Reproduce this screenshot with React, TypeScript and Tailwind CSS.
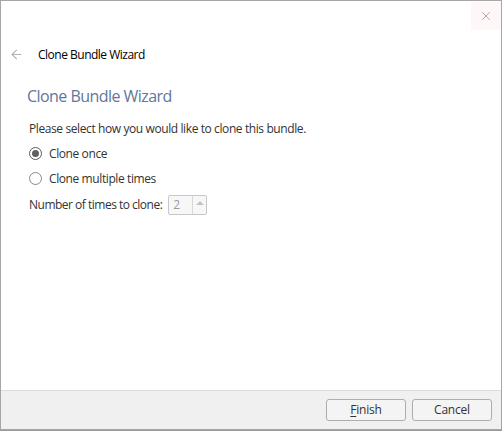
import { ArrowLeft, X } from "lucide-react"

function Radio({ checked, label }: { checked: boolean; label: string }) {
    return (
        <label className="flex items-center gap-[7px] h-[25px]">
            <span className={`w-[13px] h-[13px] rounded-full border bg-white flex items-center justify-center ${checked ? "border-[#5a5a5a]" : "border-[#8a8a8a]"}`}>
                {checked && <span className="w-[7px] h-[7px] rounded-full bg-[#606060]" />}
            </span>
            <span>{label}</span>
        </label>
    )
}

export default function App() {
    return (
        <div className="w-[502px] h-[431px] bg-[#9a9a9a] text-[12px] text-[#333]" style={{ fontFamily: '"Open Sans", "Noto Sans", sans-serif' }}>
            <div className="w-[502px] h-[430px] border border-[#a6a6a6] bg-white flex flex-col">
                <div className="h-[30px] flex justify-end">
                    <button className="w-[30px] h-[28px] mt-[1px] bg-[#fff7f7] flex items-center justify-center text-[#8a8a8a]">
                        <X size={14} strokeWidth={1.2} />
                    </button>
                </div>
                <div className="h-[47px] flex items-center pl-[8px]">
                    <ArrowLeft size={15} strokeWidth={1.8} className="text-[#b4b4b4]" />
                    <span className="ml-[14px] text-black tracking-[-0.5px]">Clone Bundle Wizard</span>
                </div>
                <div className="flex-1 px-[26px] pt-[6px]">
                    <h1 className="text-[16px] text-[#61779c] tracking-[-0.55px] leading-[24px]">Clone Bundle Wizard</h1>
                    <p className="mt-[13px] ml-[2px] tracking-[-0.4px] leading-[16px]">Please select how you would like to clone this bundle.</p>
                    <div className="ml-[2px] mt-[4px] tracking-[-0.4px]">
                        <Radio checked label="Clone once" />
                        <Radio checked={false} label="Clone multiple times" />
                        <div className="flex items-center mt-[4px] gap-[6px]">
                            <span className="tracking-[-0.5px]">Number of times to clone:</span>
                            <div className="flex h-[20px] w-[39px] border border-[#c8c8c8] rounded-[2px] bg-[#f7f7f7]">
                                <span className="flex-1 pl-[4px] text-[#9a9a9a] leading-[18px]">2</span>
                                <span className="w-[14px] border-l border-[#d8d8d8] flex justify-center pt-[5px]">
                                    <span className="w-0 h-0 border-l-[4px] border-r-[4px] border-b-[4px] border-l-transparent border-r-transparent border-b-[#c4c4c4]" />
                                </span>
                            </div>
                        </div>
                    </div>
                </div>
                <div className="h-[39px] bg-[#f0f0f0] border-t border-[#dcdcdc] flex items-center justify-end gap-[6px] pr-[9px]">
                    <button className="w-[80px] h-[22px] border border-[#adadad] rounded-[3px] bg-[#f4f4f4] text-[#333] tracking-[-0.2px]">
                        <span className="underline underline-offset-2">F</span>inish
                    </button>
                    <button className="w-[80px] h-[22px] border border-[#adadad] rounded-[3px] bg-[#f4f4f4] text-[#333] tracking-[-0.2px]">Cancel</button>
                </div>
            </div>
        </div>
    )
}
